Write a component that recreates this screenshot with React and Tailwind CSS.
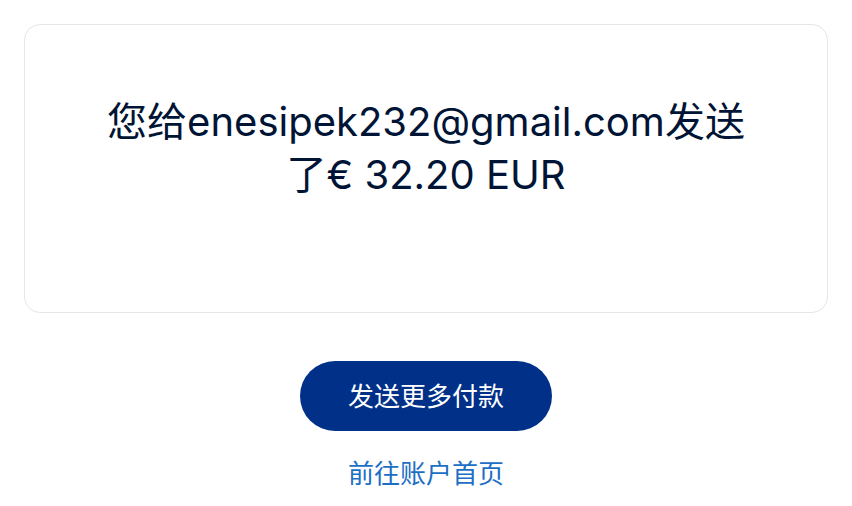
export default function App() {
  return (
    <div
      className="min-h-screen bg-white px-6 pt-6"
      style={{ fontFamily: '"Inter", "Noto Sans CJK SC", sans-serif' }}
    >
      <div className="h-[289px] rounded-2xl border border-[#e6e6e6] flex justify-center pt-[70px]">
        <h1 className="max-w-[670px] text-center text-[40px] leading-[53px] text-[#001435] font-normal">
          您给enesipek232@gmail.com发送了€ 32.20 EUR
        </h1>
      </div>

      <div className="flex flex-col items-center mt-[48px]">
        <button className="w-[252px] h-[70px] rounded-full bg-[#003087] text-white text-[26px]">
          发送更多付款
        </button>
        <a href="#" className="mt-[27px] text-[26px] leading-[32px] text-[#1c6fc4]">
          前往账户首页
        </a>
      </div>
    </div>
  );
}
